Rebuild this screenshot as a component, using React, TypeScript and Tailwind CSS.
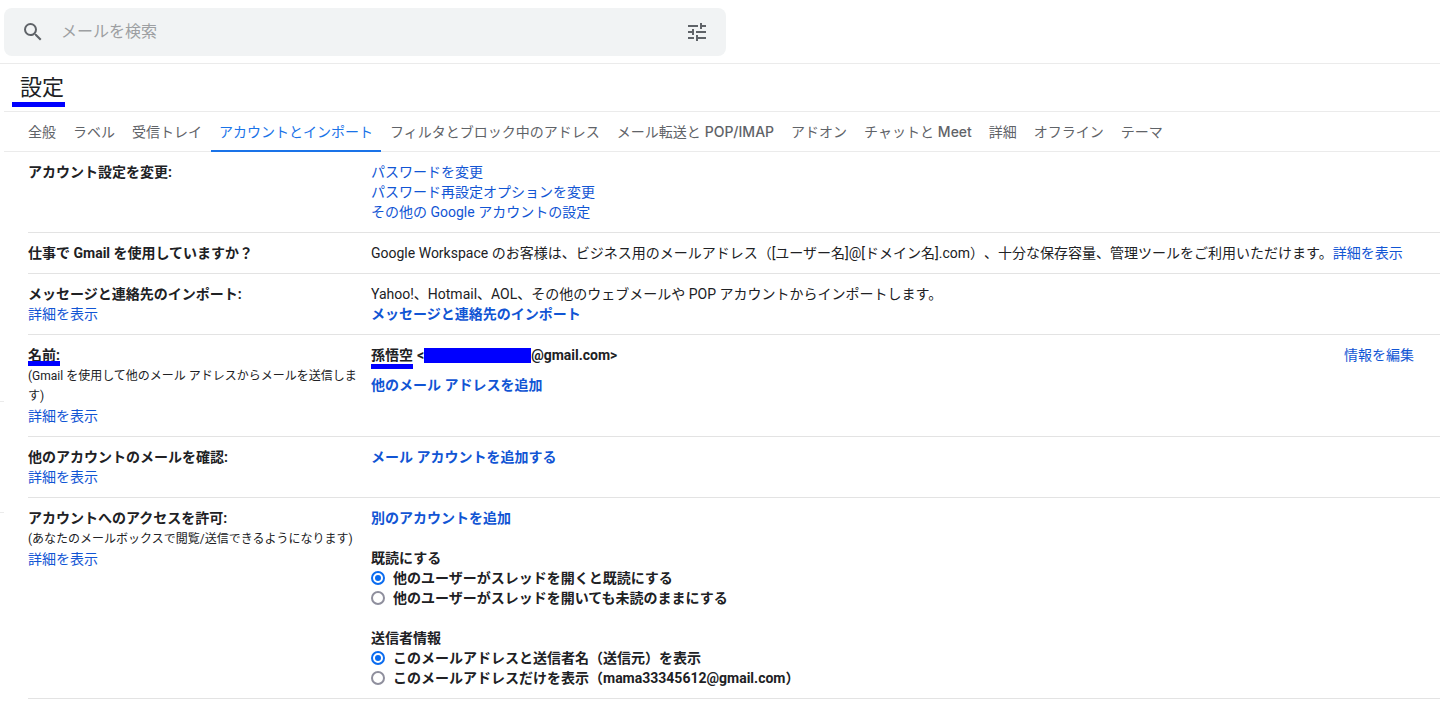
import React from "react";
import { MdSearch, MdTune } from "react-icons/md";

const TABS = [
  "全般",
  "ラベル",
  "受信トレイ",
  "アカウントとインポート",
  "フィルタとブロック中のアドレス",
  "メール転送と POP/IMAP",
  "アドオン",
  "チャットと Meet",
  "詳細",
  "オフライン",
  "テーマ",
];

const ACTIVE_TAB = "アカウントとインポート";

function Link({ children, bold = false }: { children: React.ReactNode; bold?: boolean }) {
  return (
    <a href="#" className={bold ? "font-bold text-[#1155d4]" : "text-[#1155d4]"}>
      {children}
    </a>
  );
}

function Row({
  title,
  note,
  more = false,
  children,
}: {
  title: React.ReactNode;
  note?: string;
  more?: boolean;
  children: React.ReactNode;
}) {
  return (
    <section className="grid grid-cols-[343px_1fr] border-b border-[#e3e3e3] py-2.5">
      <div>
        <h2 className="font-bold">{title}</h2>
        {note && <p className="pt-px text-xs leading-5">{note}</p>}
        {more && <Link>詳細を表示</Link>}
      </div>
      <div>{children}</div>
    </section>
  );
}

function RadioGroup({
  name,
  legend,
  options,
}: {
  name: string;
  legend: string;
  options: string[];
}) {
  return (
    <fieldset className="mt-5 font-bold">
      <legend>{legend}</legend>
      {options.map((option, i) => (
        <label key={option} className="flex items-center gap-2">
          <input
            type="radio"
            name={name}
            defaultChecked={i === 0}
            className="size-3.5 shrink-0 appearance-none rounded-full border-2 border-[#8f8f9d] bg-white bg-clip-content p-0.5 checked:border-[#0a6cf0] checked:bg-[#0a6cf0]"
          />
          {option}
        </label>
      ))}
    </fieldset>
  );
}

export default function App() {
  return (
    <div className="relative min-h-screen bg-white font-['Roboto','Noto_Sans_CJK_JP',sans-serif] text-sm leading-5 text-[#202124] [text-spacing-trim:space-all]">
      <header className="border-b border-[#ebebeb] pt-2 pb-[7px] pl-1">
        <form className="flex h-12 w-full max-w-[722px] items-center rounded-lg bg-[#f1f3f4] px-[17px]">
          <button type="button" aria-label="検索">
            <MdSearch className="size-6 text-[#5f6368]" />
          </button>
          <input
            type="text"
            aria-label="メールを検索"
            placeholder="メールを検索"
            className="ml-4 min-w-0 flex-1 bg-transparent text-base leading-6 outline-none placeholder:text-[#9d9fa2]"
          />
          <button type="button" aria-label="検索オプションを表示">
            <MdTune className="size-6 text-[#5f6368]" />
          </button>
        </form>
      </header>

      <main>
        <div className="ml-1 border-b border-[#ebebeb] px-4 pt-2 pb-[7px]">
          <h1 className="relative inline-block align-top text-[22px] leading-8">
            設定
            <span className="absolute -right-px -bottom-[3px] -left-2 h-[5px] bg-[#0000ff]" />
          </h1>
        </div>

        <nav className="ml-1 flex gap-px border-b border-[#ebebeb] pl-4 font-['Inter','Noto_Sans_CJK_JP',sans-serif] text-[#5f6368]">
          {TABS.map((tab) => (
            <a
              key={tab}
              href="#"
              className={
                tab === ACTIVE_TAB
                  ? "-mb-px border-b-2 border-[#1a73e8] px-2 pt-2.5 pb-2 whitespace-nowrap text-[#1a73e8]"
                  : "px-2 pt-2.5 pb-[9px] whitespace-nowrap"
              }
            >
              {tab.split(/(POP\/IMAP|Meet)/).map((part, i) =>
                i % 2 === 1 ? (
                  <span key={i} className="font-medium">
                    {part}
                  </span>
                ) : (
                  part
                ),
              )}
            </a>
          ))}
        </nav>

        <div className="ml-7">
          <Row title="アカウント設定を変更:">
            <ul>
              <li>
                <Link>パスワードを変更</Link>
              </li>
              <li>
                <Link>パスワード再設定オプションを変更</Link>
              </li>
              <li>
                <Link>その他の Google アカウントの設定</Link>
              </li>
            </ul>
          </Row>

          <Row title="仕事で Gmail を使用していますか？">
            <p>
              Google Workspace
              のお客様は、ビジネス用のメールアドレス（[ユーザー名]@[ドメイン名].com）、十分な保存容量、管理ツールをご利用いただけます。
              <Link>詳細を表示</Link>
            </p>
          </Row>

          <Row title="メッセージと連絡先のインポート:" more>
            <p>Yahoo!、Hotmail、AOL、その他のウェブメールや POP アカウントからインポートします。</p>
            <Link bold>メッセージと連絡先のインポート</Link>
          </Row>

          <Row
            title={
              <span className="relative">
                名前:
                <span className="absolute inset-x-0 -bottom-[3px] h-[5px] bg-[#0000ff]" />
              </span>
            }
            note="(Gmail を使用して他のメール アドレスからメールを送信します)"
            more
          >
            <div className="mb-2.5 flex justify-between pr-[26px]">
              <p className="flex items-center font-bold">
                <span className="relative">
                  孫悟空
                  <span className="absolute inset-x-0 -bottom-1 h-[5px] bg-[#0000ff]" />
                </span>
                <span className="ml-1">&lt;</span>
                <span className="h-[15px] w-[107px] bg-[#0000ff]" />
                <span>@gmail.com&gt;</span>
              </p>
              <Link>情報を編集</Link>
            </div>
            <Link bold>他のメール アドレスを追加</Link>
          </Row>

          <Row title="他のアカウントのメールを確認:" more>
            <Link bold>メール アカウントを追加する</Link>
          </Row>

          <Row
            title="アカウントへのアクセスを許可:"
            note="(あなたのメールボックスで閲覧/送信できるようになります)"
            more
          >
            <Link bold>別のアカウントを追加</Link>
            <RadioGroup
              name="read-state"
              legend="既読にする"
              options={[
                "他のユーザーがスレッドを開くと既読にする",
                "他のユーザーがスレッドを開いても未読のままにする",
              ]}
            />
            <RadioGroup
              name="sender-info"
              legend="送信者情報"
              options={[
                "このメールアドレスと送信者名（送信元）を表示",
                "このメールアドレスだけを表示（mama33345612@gmail.com）",
              ]}
            />
          </Row>
        </div>
      </main>

      <span className="absolute top-[401px] left-0 h-px w-1 bg-[#ebebeb]" />
      <span className="absolute top-[512px] left-0 h-px w-1 bg-[#ebebeb]" />
    </div>
  );
}
